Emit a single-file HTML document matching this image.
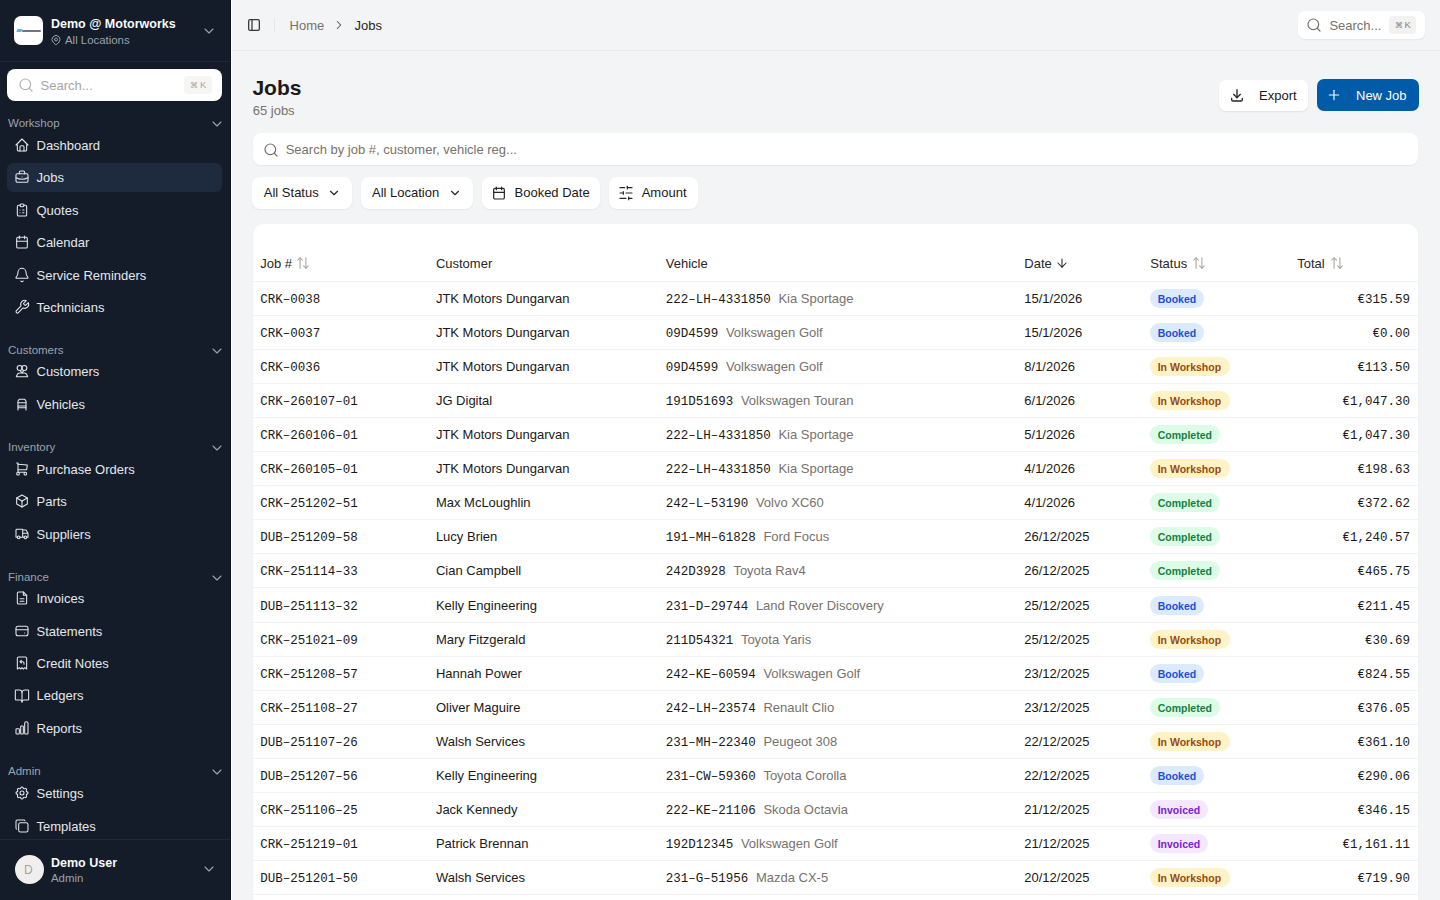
<!DOCTYPE html>
<html><head><meta charset="utf-8"><title>Jobs</title>
<style>
*{box-sizing:border-box;margin:0;padding:0}
html,body{width:1440px;height:900px;overflow:hidden}
body{font-family:"Liberation Sans",sans-serif;background:#f3f4f6;position:relative}
.t{position:absolute;white-space:nowrap}
.b{position:absolute}
svg.i{position:absolute;fill:none;stroke:currentColor;stroke-linecap:round;stroke-linejoin:round;overflow:visible}
</style></head><body>
<div class="b" style="left:0px;top:0px;width:230px;height:900px;background:#131c28"></div>
<div class="b" style="left:230px;top:0px;width:1px;height:900px;background:#0c1422"></div>
<div class="b" style="left:231px;top:0px;width:1px;height:900px;background:#ffffff"></div>
<div class="b" style="left:14px;top:16px;width:29px;height:29px;background:#fff;border-radius:7px"></div>
<div class="b" style="left:16.5px;top:29px;width:5px;height:2.8px;background:#5db4ee;transform:skewX(-25deg)"></div>
<div class="b" style="left:22px;top:29.6px;width:19px;height:2.2px;background:#6f7682;border-radius:1px"></div>
<div class="t " style="left:51px;top:18px;font-size:12.5px;line-height:12.5px;color:#f9fafb;font-weight:700;font-family:'Liberation Sans',sans-serif;">Demo @ Motorworks</div>
<svg class="i" viewBox="0 0 24 24" style="left:50px;top:33.5px;width:12px;height:12px;color:#9ca3af;stroke-width:2;"><path d="M9 11a3 3 0 1 0 6 0a3 3 0 0 0-6 0"/><path d="M17.657 16.657l-4.243 4.243a2 2 0 0 1-2.827 0l-4.244-4.243a8 8 0 1 1 11.314 0z"/></svg>
<div class="t " style="left:65px;top:35px;font-size:11.4px;line-height:11.4px;color:#9ca3af;font-weight:400;font-family:'Liberation Sans',sans-serif;">All Locations</div>
<svg class="i" viewBox="0 0 24 24" style="left:201px;top:23px;width:16px;height:16px;color:#9ca3af;stroke-width:1.6;"><path d="m6 9 6 6 6-6"/></svg>
<div class="b" style="left:0px;top:61px;width:230px;height:1px;background:#1e293b"></div>
<div class="b" style="left:7px;top:69px;width:215px;height:32px;background:#fff;border-radius:8px"></div>
<svg class="i" viewBox="0 0 24 24" style="left:17.5px;top:77px;width:16px;height:16px;color:#b3b3b3;stroke-width:1.8;"><circle cx="11" cy="11" r="8"/><path d="m21 21-4.3-4.3"/></svg>
<div class="t " style="left:40.5px;top:79px;font-size:13px;line-height:13px;color:#a6a6a6;font-weight:400;font-family:'Liberation Sans',sans-serif;">Search...</div>
<div class="b" style="left:184px;top:76px;width:28px;height:18px;background:#f5f5f4;border-radius:4px"></div>
<div class="t " style="left:189.5px;top:82px;font-size:7.5px;line-height:7.5px;color:#aaa6a2;font-weight:400;font-family:'Liberation Sans',sans-serif;">⌘</div>
<div class="t " style="left:200px;top:80px;font-size:9.5px;line-height:9.5px;color:#aaa6a2;font-weight:400;font-family:'Liberation Sans',sans-serif;">K</div>
<div class="t " style="left:8px;top:118px;font-size:11.5px;line-height:11.5px;color:#9ca3af;font-weight:400;font-family:'Liberation Sans',sans-serif;">Workshop</div>
<svg class="i" viewBox="0 0 24 24" style="left:208.5px;top:116px;width:16px;height:16px;color:#9ca3af;stroke-width:1.6;"><path d="m6 9 6 6 6-6"/></svg>
<svg class="i" viewBox="0 0 24 24" style="left:14px;top:137.0px;width:16px;height:16px;color:#e5e7eb;stroke-width:1.6;"><path d="M5 12H3l9-9 9 9h-2"/><path d="M5 12v7a2 2 0 0 0 2 2h10a2 2 0 0 0 2-2v-7"/><path d="M9 21v-6a2 2 0 0 1 2-2h2a2 2 0 0 1 2 2v6"/></svg>
<div class="t " style="left:36.5px;top:139px;font-size:13px;line-height:13px;color:#e5e7eb;font-weight:400;font-family:'Liberation Sans',sans-serif;">Dashboard</div>
<div class="b" style="left:7px;top:163.4px;width:215px;height:28.3px;background:#1e2a3d;border-radius:6px"></div>
<svg class="i" viewBox="0 0 24 24" style="left:14px;top:169.4px;width:16px;height:16px;color:#e5e7eb;stroke-width:1.6;"><path d="M3 9a2 2 0 0 1 2-2h14a2 2 0 0 1 2 2v9a2 2 0 0 1-2 2H5a2 2 0 0 1-2-2z"/><path d="M8 7V5a2 2 0 0 1 2-2h4a2 2 0 0 1 2 2v2"/><path d="M12 12v.01"/><path d="M3 13a20 20 0 0 0 18 0"/></svg>
<div class="t " style="left:36.5px;top:171px;font-size:13px;line-height:13px;color:#e5e7eb;font-weight:400;font-family:'Liberation Sans',sans-serif;">Jobs</div>
<svg class="i" viewBox="0 0 24 24" style="left:14px;top:201.8px;width:16px;height:16px;color:#e5e7eb;stroke-width:1.6;"><path d="M9 5H7a2 2 0 0 0-2 2v12a2 2 0 0 0 2 2h10a2 2 0 0 0 2-2V7a2 2 0 0 0-2-2h-2"/><path d="M9 5a2 2 0 0 1 2-2h2a2 2 0 0 1 2 2a2 2 0 0 1-2 2h-2a2 2 0 0 1-2-2z"/><path d="M9 12h.01"/><path d="M13 12h2"/><path d="M9 16h.01"/><path d="M13 16h2"/></svg>
<div class="t " style="left:36.5px;top:204px;font-size:13px;line-height:13px;color:#e5e7eb;font-weight:400;font-family:'Liberation Sans',sans-serif;">Quotes</div>
<svg class="i" viewBox="0 0 24 24" style="left:14px;top:234.2px;width:16px;height:16px;color:#e5e7eb;stroke-width:1.6;"><path d="M4 7a2 2 0 0 1 2-2h12a2 2 0 0 1 2 2v12a2 2 0 0 1-2 2H6a2 2 0 0 1-2-2z"/><path d="M16 3v4"/><path d="M8 3v4"/><path d="M4 11h16"/></svg>
<div class="t " style="left:36.5px;top:236px;font-size:13px;line-height:13px;color:#e5e7eb;font-weight:400;font-family:'Liberation Sans',sans-serif;">Calendar</div>
<svg class="i" viewBox="0 0 24 24" style="left:14px;top:266.6px;width:16px;height:16px;color:#e5e7eb;stroke-width:1.6;"><path d="M10.268 21a2 2 0 0 0 3.464 0"/><path d="M3.262 15.326A1 1 0 0 0 4 17h16a1 1 0 0 0 .74-1.673C19.41 13.956 18 12.499 18 8A6 6 0 0 0 6 8c0 4.499-1.411 5.956-2.738 7.326"/></svg>
<div class="t " style="left:36.5px;top:269px;font-size:13px;line-height:13px;color:#e5e7eb;font-weight:400;font-family:'Liberation Sans',sans-serif;">Service Reminders</div>
<svg class="i" viewBox="0 0 24 24" style="left:14px;top:299.0px;width:16px;height:16px;color:#e5e7eb;stroke-width:1.6;"><path d="M14.7 6.3a1 1 0 0 0 0 1.4l1.6 1.6a1 1 0 0 0 1.4 0l3.77-3.77a6 6 0 0 1-7.94 7.94l-6.91 6.91a2.12 2.12 0 0 1-3-3l6.91-6.91a6 6 0 0 1 7.94-7.94l-3.76 3.76z"/></svg>
<div class="t " style="left:36.5px;top:301px;font-size:13px;line-height:13px;color:#e5e7eb;font-weight:400;font-family:'Liberation Sans',sans-serif;">Technicians</div>
<div class="t " style="left:8px;top:345px;font-size:11.5px;line-height:11.5px;color:#9ca3af;font-weight:400;font-family:'Liberation Sans',sans-serif;">Customers</div>
<svg class="i" viewBox="0 0 24 24" style="left:208.5px;top:343px;width:16px;height:16px;color:#9ca3af;stroke-width:1.6;"><path d="m6 9 6 6 6-6"/></svg>
<svg class="i" viewBox="0 0 24 24" style="left:14px;top:363.4px;width:16px;height:16px;color:#e5e7eb;stroke-width:1.6;"><circle cx="8.5" cy="7.5" r="3.8"/><circle cx="15.5" cy="7.5" r="3.8"/><path d="M3.5 20.5l1.2-2.8A4 4 0 0 1 8.4 15h7.2a4 4 0 0 1 3.7 2.7l1.2 2.8z"/><path d="M9.5 11.5l2.5 3.5 2.5-3.5"/></svg>
<div class="t " style="left:36.5px;top:365px;font-size:13px;line-height:13px;color:#e5e7eb;font-weight:400;font-family:'Liberation Sans',sans-serif;">Customers</div>
<svg class="i" viewBox="0 0 24 24" style="left:14px;top:395.79999999999995px;width:16px;height:16px;color:#e5e7eb;stroke-width:1.6;"><path d="M6 21V7.5L7.8 5h8.4L18 7.5V21"/><path d="M6 10h12"/><path d="M6 15h12"/><path d="M6 17.5h12"/></svg>
<div class="t " style="left:36.5px;top:398px;font-size:13px;line-height:13px;color:#e5e7eb;font-weight:400;font-family:'Liberation Sans',sans-serif;">Vehicles</div>
<div class="t " style="left:8px;top:442px;font-size:11.5px;line-height:11.5px;color:#9ca3af;font-weight:400;font-family:'Liberation Sans',sans-serif;">Inventory</div>
<svg class="i" viewBox="0 0 24 24" style="left:208.5px;top:440px;width:16px;height:16px;color:#9ca3af;stroke-width:1.6;"><path d="m6 9 6 6 6-6"/></svg>
<svg class="i" viewBox="0 0 24 24" style="left:14px;top:461.0px;width:16px;height:16px;color:#e5e7eb;stroke-width:1.6;"><circle cx="6" cy="19" r="2"/><circle cx="17" cy="19" r="2"/><path d="M17 17H6V3H4"/><path d="M6 5l14 1-1 7H6"/></svg>
<div class="t " style="left:36.5px;top:463px;font-size:13px;line-height:13px;color:#e5e7eb;font-weight:400;font-family:'Liberation Sans',sans-serif;">Purchase Orders</div>
<svg class="i" viewBox="0 0 24 24" style="left:14px;top:493.4px;width:16px;height:16px;color:#e5e7eb;stroke-width:1.6;"><path d="M12 3l8 4.5v9L12 21l-8-4.5v-9L12 3"/><path d="M12 12l8-4.5"/><path d="M12 12v9"/><path d="M12 12L4 7.5"/></svg>
<div class="t " style="left:36.5px;top:495px;font-size:13px;line-height:13px;color:#e5e7eb;font-weight:400;font-family:'Liberation Sans',sans-serif;">Parts</div>
<svg class="i" viewBox="0 0 24 24" style="left:14px;top:525.8px;width:16px;height:16px;color:#e5e7eb;stroke-width:1.6;"><circle cx="7" cy="17" r="2"/><circle cx="17" cy="17" r="2"/><path d="M5 17H3V6a1 1 0 0 1 1-1h9v12m-4 0h6m4 0h2v-6h-8m0-5h5l3 5"/></svg>
<div class="t " style="left:36.5px;top:528px;font-size:13px;line-height:13px;color:#e5e7eb;font-weight:400;font-family:'Liberation Sans',sans-serif;">Suppliers</div>
<div class="t " style="left:8px;top:572px;font-size:11.5px;line-height:11.5px;color:#9ca3af;font-weight:400;font-family:'Liberation Sans',sans-serif;">Finance</div>
<svg class="i" viewBox="0 0 24 24" style="left:208.5px;top:570px;width:16px;height:16px;color:#9ca3af;stroke-width:1.6;"><path d="m6 9 6 6 6-6"/></svg>
<svg class="i" viewBox="0 0 24 24" style="left:14px;top:590.3px;width:16px;height:16px;color:#e5e7eb;stroke-width:1.6;"><path d="M14 3v4a1 1 0 0 0 1 1h4"/><path d="M17 21H7a2 2 0 0 1-2-2V5a2 2 0 0 1 2-2h7l5 5v11a2 2 0 0 1-2 2z"/><path d="M9 13h6"/><path d="M9 17h6"/></svg>
<div class="t " style="left:36.5px;top:592px;font-size:13px;line-height:13px;color:#e5e7eb;font-weight:400;font-family:'Liberation Sans',sans-serif;">Invoices</div>
<svg class="i" viewBox="0 0 24 24" style="left:14px;top:622.6999999999999px;width:16px;height:16px;color:#e5e7eb;stroke-width:1.6;"><path d="M3 8a3 3 0 0 1 3-3h12a3 3 0 0 1 3 3v8a3 3 0 0 1-3 3H6a3 3 0 0 1-3-3z"/><path d="M3 10h18"/><path d="M16 15h.01"/></svg>
<div class="t " style="left:36.5px;top:625px;font-size:13px;line-height:13px;color:#e5e7eb;font-weight:400;font-family:'Liberation Sans',sans-serif;">Statements</div>
<svg class="i" viewBox="0 0 24 24" style="left:14px;top:655.0999999999999px;width:16px;height:16px;color:#e5e7eb;stroke-width:1.6;"><path d="M5 21V5a2 2 0 0 1 2-2h10a2 2 0 0 1 2 2v16l-3-2-2 2-2-2-2 2-2-2-3 2"/><path d="M15 14v-2a2 2 0 0 0-2-2H9l2-2m0 4-2-2"/></svg>
<div class="t " style="left:36.5px;top:657px;font-size:13px;line-height:13px;color:#e5e7eb;font-weight:400;font-family:'Liberation Sans',sans-serif;">Credit Notes</div>
<svg class="i" viewBox="0 0 24 24" style="left:14px;top:687.5px;width:16px;height:16px;color:#e5e7eb;stroke-width:1.6;"><path d="M12 7v14"/><path d="M3 18a1 1 0 0 1-1-1V4a1 1 0 0 1 1-1h5a4 4 0 0 1 4 4 4 4 0 0 1 4-4h5a1 1 0 0 1 1 1v13a1 1 0 0 1-1 1h-6a3 3 0 0 0-3 3 3 3 0 0 0-3-3z"/></svg>
<div class="t " style="left:36.5px;top:689px;font-size:13px;line-height:13px;color:#e5e7eb;font-weight:400;font-family:'Liberation Sans',sans-serif;">Ledgers</div>
<svg class="i" viewBox="0 0 24 24" style="left:14px;top:719.9px;width:16px;height:16px;color:#e5e7eb;stroke-width:1.6;"><path d="M3 14a1 1 0 0 1 1-1h3a1 1 0 0 1 1 1v6a1 1 0 0 1-1 1H4a1 1 0 0 1-1-1z"/><path d="M10 10a1 1 0 0 1 1-1h2a1 1 0 0 1 1 1v10a1 1 0 0 1-1 1h-2a1 1 0 0 1-1-1z"/><path d="M16 5a2.5 2.5 0 0 1 5 0v15a1 1 0 0 1-1 1h-3a1 1 0 0 1-1-1z"/></svg>
<div class="t " style="left:36.5px;top:722px;font-size:13px;line-height:13px;color:#e5e7eb;font-weight:400;font-family:'Liberation Sans',sans-serif;">Reports</div>
<div class="t " style="left:8px;top:766px;font-size:11.5px;line-height:11.5px;color:#9ca3af;font-weight:400;font-family:'Liberation Sans',sans-serif;">Admin</div>
<svg class="i" viewBox="0 0 24 24" style="left:208.5px;top:764px;width:16px;height:16px;color:#9ca3af;stroke-width:1.6;"><path d="m6 9 6 6 6-6"/></svg>
<svg class="i" viewBox="0 0 24 24" style="left:14px;top:785.3px;width:16px;height:16px;color:#e5e7eb;stroke-width:1.6;"><path d="M10.325 4.317c.426-1.756 2.924-1.756 3.35 0a1.724 1.724 0 0 0 2.573 1.066c1.543-.94 3.31.826 2.37 2.37a1.724 1.724 0 0 0 1.065 2.572c1.756.426 1.756 2.924 0 3.35a1.724 1.724 0 0 0-1.066 2.573c.94 1.543-.826 3.31-2.37 2.37a1.724 1.724 0 0 0-2.572 1.065c-.426 1.756-2.924 1.756-3.35 0a1.724 1.724 0 0 0-2.573-1.066c-1.543.94-3.31-.826-2.37-2.37a1.724 1.724 0 0 0-1.065-2.572c-1.756-.426-1.756-2.924 0-3.35a1.724 1.724 0 0 0 1.066-2.573c-.94-1.543.826-3.31 2.37-2.37c1 .608 2.296.07 2.572-1.065z"/><path d="M9 12a3 3 0 1 0 6 0a3 3 0 0 0-6 0"/></svg>
<div class="t " style="left:36.5px;top:787px;font-size:13px;line-height:13px;color:#e5e7eb;font-weight:400;font-family:'Liberation Sans',sans-serif;">Settings</div>
<svg class="i" viewBox="0 0 24 24" style="left:14px;top:817.6999999999999px;width:16px;height:16px;color:#e5e7eb;stroke-width:1.6;"><path d="M7 9.667A2.667 2.667 0 0 1 9.667 7h8.666A2.667 2.667 0 0 1 21 9.667v8.666A2.667 2.667 0 0 1 18.333 21H9.667A2.667 2.667 0 0 1 7 18.333z"/><path d="M4.012 16.737A2.005 2.005 0 0 1 3 15V5c0-1.1.9-2 2-2h10c.75 0 1.158.385 1.5 1"/></svg>
<div class="t " style="left:36.5px;top:820px;font-size:13px;line-height:13px;color:#e5e7eb;font-weight:400;font-family:'Liberation Sans',sans-serif;">Templates</div>
<div class="b" style="left:0px;top:839px;width:230px;height:1px;background:#1e293b"></div>
<div class="b" style="left:14.5px;top:855px;width:29px;height:29px;background:#f0efed;border-radius:50%"></div>
<div class="t " style="left:24px;top:864px;font-size:12px;line-height:12px;color:#a8a29e;font-weight:400;font-family:'Liberation Sans',sans-serif;">D</div>
<div class="t " style="left:51px;top:857px;font-size:12.5px;line-height:12.5px;color:#f9fafb;font-weight:700;font-family:'Liberation Sans',sans-serif;">Demo User</div>
<div class="t " style="left:51px;top:873px;font-size:11.4px;line-height:11.4px;color:#9ca3af;font-weight:400;font-family:'Liberation Sans',sans-serif;">Admin</div>
<svg class="i" viewBox="0 0 24 24" style="left:200.5px;top:861px;width:16px;height:16px;color:#9ca3af;stroke-width:1.6;"><path d="m6 9 6 6 6-6"/></svg>
<svg class="i" viewBox="0 0 24 24" style="left:246px;top:17px;width:16px;height:16px;color:#3a3633;stroke-width:1.9;"><path d="M4 6a2 2 0 0 1 2-2h12a2 2 0 0 1 2 2v12a2 2 0 0 1-2 2H6a2 2 0 0 1-2-2z"/><path d="M9 4v16"/></svg>
<div class="b" style="left:274px;top:18px;width:1px;height:14px;background:#e5e7eb"></div>
<div class="t " style="left:289.6px;top:19px;font-size:13px;line-height:13px;color:#78716c;font-weight:400;font-family:'Liberation Sans',sans-serif;">Home</div>
<svg class="i" viewBox="0 0 24 24" style="left:331.5px;top:18px;width:14px;height:14px;color:#57534e;stroke-width:1.8;"><path d="m9 18 6-6-6-6"/></svg>
<div class="t " style="left:354.6px;top:19px;font-size:13px;line-height:13px;color:#292524;font-weight:400;font-family:'Liberation Sans',sans-serif;">Jobs</div>
<div class="b" style="left:232px;top:50px;width:1208px;height:1px;background:#eaebee"></div>
<div class="b" style="left:1298px;top:11px;width:127px;height:28px;background:#fff;border-radius:7px;box-shadow:0 1px 2px rgba(0,0,0,.06)"></div>
<svg class="i" viewBox="0 0 24 24" style="left:1306px;top:16.5px;width:16px;height:16px;color:#78716c;stroke-width:1.8;"><circle cx="11" cy="11" r="8"/><path d="m21 21-4.3-4.3"/></svg>
<div class="t " style="left:1329.4px;top:19px;font-size:13px;line-height:13px;color:#78716c;font-weight:400;font-family:'Liberation Sans',sans-serif;">Search...</div>
<div class="b" style="left:1389px;top:16px;width:27px;height:18px;background:#f3f2f0;border-radius:4px"></div>
<div class="t " style="left:1394.5px;top:22px;font-size:7.5px;line-height:7.5px;color:#8a847f;font-weight:400;font-family:'Liberation Sans',sans-serif;">⌘</div>
<div class="t " style="left:1404.5px;top:20px;font-size:9.5px;line-height:9.5px;color:#8a847f;font-weight:400;font-family:'Liberation Sans',sans-serif;">K</div>
<div class="t " style="left:252.4px;top:77px;font-size:21px;line-height:21px;color:#1c1917;font-weight:700;font-family:'Liberation Sans',sans-serif;">Jobs</div>
<div class="t " style="left:252.7px;top:104px;font-size:13px;line-height:13px;color:#78716c;font-weight:400;font-family:'Liberation Sans',sans-serif;">65 jobs</div>
<div class="b" style="left:1219px;top:80px;width:89px;height:31px;background:#fff;border-radius:7px;box-shadow:0 1px 2px rgba(0,0,0,.08)"></div>
<svg class="i" viewBox="0 0 24 24" style="left:1229px;top:86.5px;width:16px;height:16px;color:#292524;stroke-width:2;"><path d="M4 17v2a2 2 0 0 0 2 2h12a2 2 0 0 0 2-2v-2"/><path d="M7 11l5 5 5-5"/><path d="M12 4v12"/></svg>
<div class="t " style="left:1259px;top:89px;font-size:13px;line-height:13px;color:#1c1917;font-weight:400;font-family:'Liberation Sans',sans-serif;">Export</div>
<div class="b" style="left:1317px;top:79px;width:102px;height:32px;background:#005ba8;border-radius:7px"></div>
<svg class="i" viewBox="0 0 24 24" style="left:1325.7px;top:87.3px;width:16px;height:16px;color:#ffffff;stroke-width:1.7;"><path d="M5 12h14"/><path d="M12 5v14"/></svg>
<div class="t " style="left:1356px;top:89px;font-size:13px;line-height:13px;color:#ffffff;font-weight:400;font-family:'Liberation Sans',sans-serif;">New Job</div>
<div class="b" style="left:253px;top:133px;width:1165px;height:32px;background:#fff;border-radius:8px;box-shadow:0 1px 2px rgba(0,0,0,.06)"></div>
<svg class="i" viewBox="0 0 24 24" style="left:262.5px;top:142px;width:16px;height:16px;color:#78716c;stroke-width:1.8;"><circle cx="11" cy="11" r="8"/><path d="m21 21-4.3-4.3"/></svg>
<div class="t " style="left:285.7px;top:143px;font-size:13px;line-height:13px;color:#78716c;font-weight:400;font-family:'Liberation Sans',sans-serif;">Search by job #, customer, vehicle reg...</div>
<div class="b" style="left:252px;top:177px;width:100px;height:32px;background:#fff;border-radius:8px;box-shadow:0 1px 2px rgba(0,0,0,.06)"></div>
<div class="t " style="left:263.8px;top:186px;font-size:13px;line-height:13px;color:#1c1917;font-weight:400;font-family:'Liberation Sans',sans-serif;">All Status</div>
<svg class="i" viewBox="0 0 24 24" style="left:327.3px;top:186px;width:14px;height:14px;color:#292524;stroke-width:2;"><path d="m6 9 6 6 6-6"/></svg>
<div class="b" style="left:361px;top:177px;width:112px;height:32px;background:#fff;border-radius:8px;box-shadow:0 1px 2px rgba(0,0,0,.06)"></div>
<div class="t " style="left:372px;top:186px;font-size:13px;line-height:13px;color:#1c1917;font-weight:400;font-family:'Liberation Sans',sans-serif;">All Location</div>
<svg class="i" viewBox="0 0 24 24" style="left:448px;top:186px;width:14px;height:14px;color:#292524;stroke-width:2;"><path d="m6 9 6 6 6-6"/></svg>
<div class="b" style="left:482px;top:177px;width:118px;height:32px;background:#fff;border-radius:8px;box-shadow:0 1px 2px rgba(0,0,0,.06)"></div>
<div class="t " style="left:514.5px;top:186px;font-size:13px;line-height:13px;color:#1c1917;font-weight:400;font-family:'Liberation Sans',sans-serif;">Booked Date</div>
<svg class="i" viewBox="0 0 24 24" style="left:491px;top:185px;width:16px;height:16px;color:#292524;stroke-width:1.8;"><path d="M4 7a2 2 0 0 1 2-2h12a2 2 0 0 1 2 2v12a2 2 0 0 1-2 2H6a2 2 0 0 1-2-2z"/><path d="M16 3v4"/><path d="M8 3v4"/><path d="M4 11h16"/></svg>
<div class="b" style="left:609px;top:177px;width:89px;height:32px;background:#fff;border-radius:8px;box-shadow:0 1px 2px rgba(0,0,0,.06)"></div>
<div class="t " style="left:641.7px;top:186px;font-size:13px;line-height:13px;color:#1c1917;font-weight:400;font-family:'Liberation Sans',sans-serif;">Amount</div>
<svg class="i" viewBox="0 0 24 24" style="left:618.3px;top:185px;width:16px;height:16px;color:#292524;stroke-width:1.8;"><path d="M21 4h-7"/><path d="M10 4H3"/><path d="M21 12h-9"/><path d="M8 12H3"/><path d="M21 20h-5"/><path d="M12 20H3"/><path d="M14 2v4"/><path d="M8 10v4"/><path d="M16 18v4"/></svg>
<div class="b" style="left:252.5px;top:223.5px;width:1165px;height:700px;background:#fff;border-radius:11px;box-shadow:0 1px 2px rgba(0,0,0,.06)"></div>
<div class="t " style="left:260.3px;top:257px;font-size:13px;line-height:13px;color:#292524;font-weight:400;font-family:'Liberation Sans',sans-serif;">Job #</div>
<svg class="i" viewBox="0 0 24 24" style="left:296px;top:256px;width:14px;height:14px;color:#a8a29e;stroke-width:1.8;"><path d="M3 7l4-4 4 4"/><path d="M7 3v18"/><path d="M21 17l-4 4-4-4"/><path d="M17 21V3"/></svg>
<div class="t " style="left:435.9px;top:257px;font-size:13px;line-height:13px;color:#292524;font-weight:400;font-family:'Liberation Sans',sans-serif;">Customer</div>
<div class="t " style="left:665.8px;top:257px;font-size:13px;line-height:13px;color:#292524;font-weight:400;font-family:'Liberation Sans',sans-serif;">Vehicle</div>
<div class="t " style="left:1024.3px;top:257px;font-size:13px;line-height:13px;color:#292524;font-weight:400;font-family:'Liberation Sans',sans-serif;">Date</div>
<svg class="i" viewBox="0 0 24 24" style="left:1055.2px;top:256.2px;width:14px;height:14px;color:#292524;stroke-width:1.8;"><path d="M12 5v14"/><path d="m19 12-7 7-7-7"/></svg>
<div class="t " style="left:1150.3px;top:257px;font-size:13px;line-height:13px;color:#292524;font-weight:400;font-family:'Liberation Sans',sans-serif;">Status</div>
<svg class="i" viewBox="0 0 24 24" style="left:1192px;top:256px;width:14px;height:14px;color:#a8a29e;stroke-width:1.8;"><path d="M3 7l4-4 4 4"/><path d="M7 3v18"/><path d="M21 17l-4 4-4-4"/><path d="M17 21V3"/></svg>
<div class="t " style="left:1297.2px;top:257px;font-size:13px;line-height:13px;color:#292524;font-weight:400;font-family:'Liberation Sans',sans-serif;">Total</div>
<svg class="i" viewBox="0 0 24 24" style="left:1330px;top:256px;width:14px;height:14px;color:#a8a29e;stroke-width:1.8;"><path d="M3 7l4-4 4 4"/><path d="M7 3v18"/><path d="M21 17l-4 4-4-4"/><path d="M17 21V3"/></svg>
<div class="b" style="left:252.5px;top:281px;width:1165px;height:1px;background:#f2f3f4"></div>
<div class="t " style="left:260.3px;top:294px;font-size:12.5px;line-height:12.5px;color:#1c1917;font-weight:400;font-family:'Liberation Mono',monospace;">CRK–0038</div>
<div class="t " style="left:435.9px;top:292px;font-size:13px;line-height:13px;color:#1c1917;font-weight:400;font-family:'Liberation Sans',sans-serif;">JTK Motors Dungarvan</div>
<div class="t " style="left:665.8px;top:294px;font-size:12.5px;line-height:12.5px;color:#1c1917;font-weight:400;font-family:'Liberation Mono',monospace;">222–LH–4331850</div>
<div class="t " style="left:778.4px;top:292px;font-size:13px;line-height:13px;color:#78716c;font-weight:400;font-family:'Liberation Sans',sans-serif;">Kia Sportage</div>
<div class="t " style="left:1024.3px;top:292px;font-size:13px;line-height:13px;color:#1c1917;font-weight:400;font-family:'Liberation Sans',sans-serif;">15/1/2026</div>
<div class="b" style="left:1149.7px;top:289px;width:54.3px;height:19px;background:#dbeafe;border-radius:10px"></div>
<div class="t " style="left:1157.7px;top:294px;font-size:10.5px;line-height:10.5px;color:#1d4ed8;font-weight:700;font-family:'Liberation Sans',sans-serif;">Booked</div>
<div class="t" style="right:30px;top:294px;font-size:12.5px;line-height:12.5px;color:#1c1917;font-weight:400;font-family:'Liberation Mono',monospace;text-align:right;">€315.59</div>
<div class="b" style="left:252.5px;top:315px;width:1165px;height:1px;background:#f2f3f4"></div>
<div class="t " style="left:260.3px;top:328px;font-size:12.5px;line-height:12.5px;color:#1c1917;font-weight:400;font-family:'Liberation Mono',monospace;">CRK–0037</div>
<div class="t " style="left:435.9px;top:326px;font-size:13px;line-height:13px;color:#1c1917;font-weight:400;font-family:'Liberation Sans',sans-serif;">JTK Motors Dungarvan</div>
<div class="t " style="left:665.8px;top:328px;font-size:12.5px;line-height:12.5px;color:#1c1917;font-weight:400;font-family:'Liberation Mono',monospace;">09D4599</div>
<div class="t " style="left:725.9px;top:326px;font-size:13px;line-height:13px;color:#78716c;font-weight:400;font-family:'Liberation Sans',sans-serif;">Volkswagen Golf</div>
<div class="t " style="left:1024.3px;top:326px;font-size:13px;line-height:13px;color:#1c1917;font-weight:400;font-family:'Liberation Sans',sans-serif;">15/1/2026</div>
<div class="b" style="left:1149.7px;top:323px;width:54.3px;height:19px;background:#dbeafe;border-radius:10px"></div>
<div class="t " style="left:1157.7px;top:328px;font-size:10.5px;line-height:10.5px;color:#1d4ed8;font-weight:700;font-family:'Liberation Sans',sans-serif;">Booked</div>
<div class="t" style="right:30px;top:328px;font-size:12.5px;line-height:12.5px;color:#1c1917;font-weight:400;font-family:'Liberation Mono',monospace;text-align:right;">€0.00</div>
<div class="b" style="left:252.5px;top:349px;width:1165px;height:1px;background:#f2f3f4"></div>
<div class="t " style="left:260.3px;top:362px;font-size:12.5px;line-height:12.5px;color:#1c1917;font-weight:400;font-family:'Liberation Mono',monospace;">CRK–0036</div>
<div class="t " style="left:435.9px;top:360px;font-size:13px;line-height:13px;color:#1c1917;font-weight:400;font-family:'Liberation Sans',sans-serif;">JTK Motors Dungarvan</div>
<div class="t " style="left:665.8px;top:362px;font-size:12.5px;line-height:12.5px;color:#1c1917;font-weight:400;font-family:'Liberation Mono',monospace;">09D4599</div>
<div class="t " style="left:725.9px;top:360px;font-size:13px;line-height:13px;color:#78716c;font-weight:400;font-family:'Liberation Sans',sans-serif;">Volkswagen Golf</div>
<div class="t " style="left:1024.3px;top:360px;font-size:13px;line-height:13px;color:#1c1917;font-weight:400;font-family:'Liberation Sans',sans-serif;">8/1/2026</div>
<div class="b" style="left:1149.7px;top:357px;width:80.3px;height:19px;background:#fef3c7;border-radius:10px"></div>
<div class="t " style="left:1157.7px;top:362px;font-size:10.5px;line-height:10.5px;color:#9a4a0c;font-weight:700;font-family:'Liberation Sans',sans-serif;">In Workshop</div>
<div class="t" style="right:30px;top:362px;font-size:12.5px;line-height:12.5px;color:#1c1917;font-weight:400;font-family:'Liberation Mono',monospace;text-align:right;">€113.50</div>
<div class="b" style="left:252.5px;top:383px;width:1165px;height:1px;background:#f2f3f4"></div>
<div class="t " style="left:260.3px;top:396px;font-size:12.5px;line-height:12.5px;color:#1c1917;font-weight:400;font-family:'Liberation Mono',monospace;">CRK–260107–01</div>
<div class="t " style="left:435.9px;top:394px;font-size:13px;line-height:13px;color:#1c1917;font-weight:400;font-family:'Liberation Sans',sans-serif;">JG Digital</div>
<div class="t " style="left:665.8px;top:396px;font-size:12.5px;line-height:12.5px;color:#1c1917;font-weight:400;font-family:'Liberation Mono',monospace;">191D51693</div>
<div class="t " style="left:740.9px;top:394px;font-size:13px;line-height:13px;color:#78716c;font-weight:400;font-family:'Liberation Sans',sans-serif;">Volkswagen Touran</div>
<div class="t " style="left:1024.3px;top:394px;font-size:13px;line-height:13px;color:#1c1917;font-weight:400;font-family:'Liberation Sans',sans-serif;">6/1/2026</div>
<div class="b" style="left:1149.7px;top:391px;width:80.3px;height:19px;background:#fef3c7;border-radius:10px"></div>
<div class="t " style="left:1157.7px;top:396px;font-size:10.5px;line-height:10.5px;color:#9a4a0c;font-weight:700;font-family:'Liberation Sans',sans-serif;">In Workshop</div>
<div class="t" style="right:30px;top:396px;font-size:12.5px;line-height:12.5px;color:#1c1917;font-weight:400;font-family:'Liberation Mono',monospace;text-align:right;">€1,047.30</div>
<div class="b" style="left:252.5px;top:417px;width:1165px;height:1px;background:#f2f3f4"></div>
<div class="t " style="left:260.3px;top:430px;font-size:12.5px;line-height:12.5px;color:#1c1917;font-weight:400;font-family:'Liberation Mono',monospace;">CRK–260106–01</div>
<div class="t " style="left:435.9px;top:428px;font-size:13px;line-height:13px;color:#1c1917;font-weight:400;font-family:'Liberation Sans',sans-serif;">JTK Motors Dungarvan</div>
<div class="t " style="left:665.8px;top:430px;font-size:12.5px;line-height:12.5px;color:#1c1917;font-weight:400;font-family:'Liberation Mono',monospace;">222–LH–4331850</div>
<div class="t " style="left:778.4px;top:428px;font-size:13px;line-height:13px;color:#78716c;font-weight:400;font-family:'Liberation Sans',sans-serif;">Kia Sportage</div>
<div class="t " style="left:1024.3px;top:428px;font-size:13px;line-height:13px;color:#1c1917;font-weight:400;font-family:'Liberation Sans',sans-serif;">5/1/2026</div>
<div class="b" style="left:1149.7px;top:425px;width:70px;height:19px;background:#dcfce7;border-radius:10px"></div>
<div class="t " style="left:1157.7px;top:430px;font-size:10.5px;line-height:10.5px;color:#15803d;font-weight:700;font-family:'Liberation Sans',sans-serif;">Completed</div>
<div class="t" style="right:30px;top:430px;font-size:12.5px;line-height:12.5px;color:#1c1917;font-weight:400;font-family:'Liberation Mono',monospace;text-align:right;">€1,047.30</div>
<div class="b" style="left:252.5px;top:451px;width:1165px;height:1px;background:#f2f3f4"></div>
<div class="t " style="left:260.3px;top:464px;font-size:12.5px;line-height:12.5px;color:#1c1917;font-weight:400;font-family:'Liberation Mono',monospace;">CRK–260105–01</div>
<div class="t " style="left:435.9px;top:462px;font-size:13px;line-height:13px;color:#1c1917;font-weight:400;font-family:'Liberation Sans',sans-serif;">JTK Motors Dungarvan</div>
<div class="t " style="left:665.8px;top:464px;font-size:12.5px;line-height:12.5px;color:#1c1917;font-weight:400;font-family:'Liberation Mono',monospace;">222–LH–4331850</div>
<div class="t " style="left:778.4px;top:462px;font-size:13px;line-height:13px;color:#78716c;font-weight:400;font-family:'Liberation Sans',sans-serif;">Kia Sportage</div>
<div class="t " style="left:1024.3px;top:462px;font-size:13px;line-height:13px;color:#1c1917;font-weight:400;font-family:'Liberation Sans',sans-serif;">4/1/2026</div>
<div class="b" style="left:1149.7px;top:459px;width:80.3px;height:19px;background:#fef3c7;border-radius:10px"></div>
<div class="t " style="left:1157.7px;top:464px;font-size:10.5px;line-height:10.5px;color:#9a4a0c;font-weight:700;font-family:'Liberation Sans',sans-serif;">In Workshop</div>
<div class="t" style="right:30px;top:464px;font-size:12.5px;line-height:12.5px;color:#1c1917;font-weight:400;font-family:'Liberation Mono',monospace;text-align:right;">€198.63</div>
<div class="b" style="left:252.5px;top:485px;width:1165px;height:1px;background:#f2f3f4"></div>
<div class="t " style="left:260.3px;top:498px;font-size:12.5px;line-height:12.5px;color:#1c1917;font-weight:400;font-family:'Liberation Mono',monospace;">CRK–251202–51</div>
<div class="t " style="left:435.9px;top:496px;font-size:13px;line-height:13px;color:#1c1917;font-weight:400;font-family:'Liberation Sans',sans-serif;">Max McLoughlin</div>
<div class="t " style="left:665.8px;top:498px;font-size:12.5px;line-height:12.5px;color:#1c1917;font-weight:400;font-family:'Liberation Mono',monospace;">242–L–53190</div>
<div class="t " style="left:755.9px;top:496px;font-size:13px;line-height:13px;color:#78716c;font-weight:400;font-family:'Liberation Sans',sans-serif;">Volvo XC60</div>
<div class="t " style="left:1024.3px;top:496px;font-size:13px;line-height:13px;color:#1c1917;font-weight:400;font-family:'Liberation Sans',sans-serif;">4/1/2026</div>
<div class="b" style="left:1149.7px;top:493px;width:70px;height:19px;background:#dcfce7;border-radius:10px"></div>
<div class="t " style="left:1157.7px;top:498px;font-size:10.5px;line-height:10.5px;color:#15803d;font-weight:700;font-family:'Liberation Sans',sans-serif;">Completed</div>
<div class="t" style="right:30px;top:498px;font-size:12.5px;line-height:12.5px;color:#1c1917;font-weight:400;font-family:'Liberation Mono',monospace;text-align:right;">€372.62</div>
<div class="b" style="left:252.5px;top:519px;width:1165px;height:1px;background:#f2f3f4"></div>
<div class="t " style="left:260.3px;top:532px;font-size:12.5px;line-height:12.5px;color:#1c1917;font-weight:400;font-family:'Liberation Mono',monospace;">DUB–251209–58</div>
<div class="t " style="left:435.9px;top:530px;font-size:13px;line-height:13px;color:#1c1917;font-weight:400;font-family:'Liberation Sans',sans-serif;">Lucy Brien</div>
<div class="t " style="left:665.8px;top:532px;font-size:12.5px;line-height:12.5px;color:#1c1917;font-weight:400;font-family:'Liberation Mono',monospace;">191–MH–61828</div>
<div class="t " style="left:763.4px;top:530px;font-size:13px;line-height:13px;color:#78716c;font-weight:400;font-family:'Liberation Sans',sans-serif;">Ford Focus</div>
<div class="t " style="left:1024.3px;top:530px;font-size:13px;line-height:13px;color:#1c1917;font-weight:400;font-family:'Liberation Sans',sans-serif;">26/12/2025</div>
<div class="b" style="left:1149.7px;top:527px;width:70px;height:19px;background:#dcfce7;border-radius:10px"></div>
<div class="t " style="left:1157.7px;top:532px;font-size:10.5px;line-height:10.5px;color:#15803d;font-weight:700;font-family:'Liberation Sans',sans-serif;">Completed</div>
<div class="t" style="right:30px;top:532px;font-size:12.5px;line-height:12.5px;color:#1c1917;font-weight:400;font-family:'Liberation Mono',monospace;text-align:right;">€1,240.57</div>
<div class="b" style="left:252.5px;top:553px;width:1165px;height:1px;background:#f2f3f4"></div>
<div class="t " style="left:260.3px;top:566px;font-size:12.5px;line-height:12.5px;color:#1c1917;font-weight:400;font-family:'Liberation Mono',monospace;">CRK–251114–33</div>
<div class="t " style="left:435.9px;top:564px;font-size:13px;line-height:13px;color:#1c1917;font-weight:400;font-family:'Liberation Sans',sans-serif;">Cian Campbell</div>
<div class="t " style="left:665.8px;top:566px;font-size:12.5px;line-height:12.5px;color:#1c1917;font-weight:400;font-family:'Liberation Mono',monospace;">242D3928</div>
<div class="t " style="left:733.4px;top:564px;font-size:13px;line-height:13px;color:#78716c;font-weight:400;font-family:'Liberation Sans',sans-serif;">Toyota Rav4</div>
<div class="t " style="left:1024.3px;top:564px;font-size:13px;line-height:13px;color:#1c1917;font-weight:400;font-family:'Liberation Sans',sans-serif;">26/12/2025</div>
<div class="b" style="left:1149.7px;top:561px;width:70px;height:19px;background:#dcfce7;border-radius:10px"></div>
<div class="t " style="left:1157.7px;top:566px;font-size:10.5px;line-height:10.5px;color:#15803d;font-weight:700;font-family:'Liberation Sans',sans-serif;">Completed</div>
<div class="t" style="right:30px;top:566px;font-size:12.5px;line-height:12.5px;color:#1c1917;font-weight:400;font-family:'Liberation Mono',monospace;text-align:right;">€465.75</div>
<div class="b" style="left:252.5px;top:587px;width:1165px;height:1px;background:#f2f3f4"></div>
<div class="t " style="left:260.3px;top:601px;font-size:12.5px;line-height:12.5px;color:#1c1917;font-weight:400;font-family:'Liberation Mono',monospace;">DUB–251113–32</div>
<div class="t " style="left:435.9px;top:599px;font-size:13px;line-height:13px;color:#1c1917;font-weight:400;font-family:'Liberation Sans',sans-serif;">Kelly Engineering</div>
<div class="t " style="left:665.8px;top:601px;font-size:12.5px;line-height:12.5px;color:#1c1917;font-weight:400;font-family:'Liberation Mono',monospace;">231–D–29744</div>
<div class="t " style="left:755.9px;top:599px;font-size:13px;line-height:13px;color:#78716c;font-weight:400;font-family:'Liberation Sans',sans-serif;">Land Rover Discovery</div>
<div class="t " style="left:1024.3px;top:599px;font-size:13px;line-height:13px;color:#1c1917;font-weight:400;font-family:'Liberation Sans',sans-serif;">25/12/2025</div>
<div class="b" style="left:1149.7px;top:596px;width:54.3px;height:19px;background:#dbeafe;border-radius:10px"></div>
<div class="t " style="left:1157.7px;top:601px;font-size:10.5px;line-height:10.5px;color:#1d4ed8;font-weight:700;font-family:'Liberation Sans',sans-serif;">Booked</div>
<div class="t" style="right:30px;top:601px;font-size:12.5px;line-height:12.5px;color:#1c1917;font-weight:400;font-family:'Liberation Mono',monospace;text-align:right;">€211.45</div>
<div class="b" style="left:252.5px;top:622px;width:1165px;height:1px;background:#f2f3f4"></div>
<div class="t " style="left:260.3px;top:635px;font-size:12.5px;line-height:12.5px;color:#1c1917;font-weight:400;font-family:'Liberation Mono',monospace;">CRK–251021–09</div>
<div class="t " style="left:435.9px;top:633px;font-size:13px;line-height:13px;color:#1c1917;font-weight:400;font-family:'Liberation Sans',sans-serif;">Mary Fitzgerald</div>
<div class="t " style="left:665.8px;top:635px;font-size:12.5px;line-height:12.5px;color:#1c1917;font-weight:400;font-family:'Liberation Mono',monospace;">211D54321</div>
<div class="t " style="left:740.9px;top:633px;font-size:13px;line-height:13px;color:#78716c;font-weight:400;font-family:'Liberation Sans',sans-serif;">Toyota Yaris</div>
<div class="t " style="left:1024.3px;top:633px;font-size:13px;line-height:13px;color:#1c1917;font-weight:400;font-family:'Liberation Sans',sans-serif;">25/12/2025</div>
<div class="b" style="left:1149.7px;top:630px;width:80.3px;height:19px;background:#fef3c7;border-radius:10px"></div>
<div class="t " style="left:1157.7px;top:635px;font-size:10.5px;line-height:10.5px;color:#9a4a0c;font-weight:700;font-family:'Liberation Sans',sans-serif;">In Workshop</div>
<div class="t" style="right:30px;top:635px;font-size:12.5px;line-height:12.5px;color:#1c1917;font-weight:400;font-family:'Liberation Mono',monospace;text-align:right;">€30.69</div>
<div class="b" style="left:252.5px;top:656px;width:1165px;height:1px;background:#f2f3f4"></div>
<div class="t " style="left:260.3px;top:669px;font-size:12.5px;line-height:12.5px;color:#1c1917;font-weight:400;font-family:'Liberation Mono',monospace;">CRK–251208–57</div>
<div class="t " style="left:435.9px;top:667px;font-size:13px;line-height:13px;color:#1c1917;font-weight:400;font-family:'Liberation Sans',sans-serif;">Hannah Power</div>
<div class="t " style="left:665.8px;top:669px;font-size:12.5px;line-height:12.5px;color:#1c1917;font-weight:400;font-family:'Liberation Mono',monospace;">242–KE–60594</div>
<div class="t " style="left:763.4px;top:667px;font-size:13px;line-height:13px;color:#78716c;font-weight:400;font-family:'Liberation Sans',sans-serif;">Volkswagen Golf</div>
<div class="t " style="left:1024.3px;top:667px;font-size:13px;line-height:13px;color:#1c1917;font-weight:400;font-family:'Liberation Sans',sans-serif;">23/12/2025</div>
<div class="b" style="left:1149.7px;top:664px;width:54.3px;height:19px;background:#dbeafe;border-radius:10px"></div>
<div class="t " style="left:1157.7px;top:669px;font-size:10.5px;line-height:10.5px;color:#1d4ed8;font-weight:700;font-family:'Liberation Sans',sans-serif;">Booked</div>
<div class="t" style="right:30px;top:669px;font-size:12.5px;line-height:12.5px;color:#1c1917;font-weight:400;font-family:'Liberation Mono',monospace;text-align:right;">€824.55</div>
<div class="b" style="left:252.5px;top:690px;width:1165px;height:1px;background:#f2f3f4"></div>
<div class="t " style="left:260.3px;top:703px;font-size:12.5px;line-height:12.5px;color:#1c1917;font-weight:400;font-family:'Liberation Mono',monospace;">CRK–251108–27</div>
<div class="t " style="left:435.9px;top:701px;font-size:13px;line-height:13px;color:#1c1917;font-weight:400;font-family:'Liberation Sans',sans-serif;">Oliver Maguire</div>
<div class="t " style="left:665.8px;top:703px;font-size:12.5px;line-height:12.5px;color:#1c1917;font-weight:400;font-family:'Liberation Mono',monospace;">242–LH–23574</div>
<div class="t " style="left:763.4px;top:701px;font-size:13px;line-height:13px;color:#78716c;font-weight:400;font-family:'Liberation Sans',sans-serif;">Renault Clio</div>
<div class="t " style="left:1024.3px;top:701px;font-size:13px;line-height:13px;color:#1c1917;font-weight:400;font-family:'Liberation Sans',sans-serif;">23/12/2025</div>
<div class="b" style="left:1149.7px;top:698px;width:70px;height:19px;background:#dcfce7;border-radius:10px"></div>
<div class="t " style="left:1157.7px;top:703px;font-size:10.5px;line-height:10.5px;color:#15803d;font-weight:700;font-family:'Liberation Sans',sans-serif;">Completed</div>
<div class="t" style="right:30px;top:703px;font-size:12.5px;line-height:12.5px;color:#1c1917;font-weight:400;font-family:'Liberation Mono',monospace;text-align:right;">€376.05</div>
<div class="b" style="left:252.5px;top:724px;width:1165px;height:1px;background:#f2f3f4"></div>
<div class="t " style="left:260.3px;top:737px;font-size:12.5px;line-height:12.5px;color:#1c1917;font-weight:400;font-family:'Liberation Mono',monospace;">DUB–251107–26</div>
<div class="t " style="left:435.9px;top:735px;font-size:13px;line-height:13px;color:#1c1917;font-weight:400;font-family:'Liberation Sans',sans-serif;">Walsh Services</div>
<div class="t " style="left:665.8px;top:737px;font-size:12.5px;line-height:12.5px;color:#1c1917;font-weight:400;font-family:'Liberation Mono',monospace;">231–MH–22340</div>
<div class="t " style="left:763.4px;top:735px;font-size:13px;line-height:13px;color:#78716c;font-weight:400;font-family:'Liberation Sans',sans-serif;">Peugeot 308</div>
<div class="t " style="left:1024.3px;top:735px;font-size:13px;line-height:13px;color:#1c1917;font-weight:400;font-family:'Liberation Sans',sans-serif;">22/12/2025</div>
<div class="b" style="left:1149.7px;top:732px;width:80.3px;height:19px;background:#fef3c7;border-radius:10px"></div>
<div class="t " style="left:1157.7px;top:737px;font-size:10.5px;line-height:10.5px;color:#9a4a0c;font-weight:700;font-family:'Liberation Sans',sans-serif;">In Workshop</div>
<div class="t" style="right:30px;top:737px;font-size:12.5px;line-height:12.5px;color:#1c1917;font-weight:400;font-family:'Liberation Mono',monospace;text-align:right;">€361.10</div>
<div class="b" style="left:252.5px;top:758px;width:1165px;height:1px;background:#f2f3f4"></div>
<div class="t " style="left:260.3px;top:771px;font-size:12.5px;line-height:12.5px;color:#1c1917;font-weight:400;font-family:'Liberation Mono',monospace;">DUB–251207–56</div>
<div class="t " style="left:435.9px;top:769px;font-size:13px;line-height:13px;color:#1c1917;font-weight:400;font-family:'Liberation Sans',sans-serif;">Kelly Engineering</div>
<div class="t " style="left:665.8px;top:771px;font-size:12.5px;line-height:12.5px;color:#1c1917;font-weight:400;font-family:'Liberation Mono',monospace;">231–CW–59360</div>
<div class="t " style="left:763.4px;top:769px;font-size:13px;line-height:13px;color:#78716c;font-weight:400;font-family:'Liberation Sans',sans-serif;">Toyota Corolla</div>
<div class="t " style="left:1024.3px;top:769px;font-size:13px;line-height:13px;color:#1c1917;font-weight:400;font-family:'Liberation Sans',sans-serif;">22/12/2025</div>
<div class="b" style="left:1149.7px;top:766px;width:54.3px;height:19px;background:#dbeafe;border-radius:10px"></div>
<div class="t " style="left:1157.7px;top:771px;font-size:10.5px;line-height:10.5px;color:#1d4ed8;font-weight:700;font-family:'Liberation Sans',sans-serif;">Booked</div>
<div class="t" style="right:30px;top:771px;font-size:12.5px;line-height:12.5px;color:#1c1917;font-weight:400;font-family:'Liberation Mono',monospace;text-align:right;">€290.06</div>
<div class="b" style="left:252.5px;top:792px;width:1165px;height:1px;background:#f2f3f4"></div>
<div class="t " style="left:260.3px;top:805px;font-size:12.5px;line-height:12.5px;color:#1c1917;font-weight:400;font-family:'Liberation Mono',monospace;">CRK–251106–25</div>
<div class="t " style="left:435.9px;top:803px;font-size:13px;line-height:13px;color:#1c1917;font-weight:400;font-family:'Liberation Sans',sans-serif;">Jack Kennedy</div>
<div class="t " style="left:665.8px;top:805px;font-size:12.5px;line-height:12.5px;color:#1c1917;font-weight:400;font-family:'Liberation Mono',monospace;">222–KE–21106</div>
<div class="t " style="left:763.4px;top:803px;font-size:13px;line-height:13px;color:#78716c;font-weight:400;font-family:'Liberation Sans',sans-serif;">Skoda Octavia</div>
<div class="t " style="left:1024.3px;top:803px;font-size:13px;line-height:13px;color:#1c1917;font-weight:400;font-family:'Liberation Sans',sans-serif;">21/12/2025</div>
<div class="b" style="left:1149.7px;top:800px;width:58px;height:19px;background:#f3e8ff;border-radius:10px"></div>
<div class="t " style="left:1157.7px;top:805px;font-size:10.5px;line-height:10.5px;color:#7e22ce;font-weight:700;font-family:'Liberation Sans',sans-serif;">Invoiced</div>
<div class="t" style="right:30px;top:805px;font-size:12.5px;line-height:12.5px;color:#1c1917;font-weight:400;font-family:'Liberation Mono',monospace;text-align:right;">€346.15</div>
<div class="b" style="left:252.5px;top:826px;width:1165px;height:1px;background:#f2f3f4"></div>
<div class="t " style="left:260.3px;top:839px;font-size:12.5px;line-height:12.5px;color:#1c1917;font-weight:400;font-family:'Liberation Mono',monospace;">CRK–251219–01</div>
<div class="t " style="left:435.9px;top:837px;font-size:13px;line-height:13px;color:#1c1917;font-weight:400;font-family:'Liberation Sans',sans-serif;">Patrick Brennan</div>
<div class="t " style="left:665.8px;top:839px;font-size:12.5px;line-height:12.5px;color:#1c1917;font-weight:400;font-family:'Liberation Mono',monospace;">192D12345</div>
<div class="t " style="left:740.9px;top:837px;font-size:13px;line-height:13px;color:#78716c;font-weight:400;font-family:'Liberation Sans',sans-serif;">Volkswagen Golf</div>
<div class="t " style="left:1024.3px;top:837px;font-size:13px;line-height:13px;color:#1c1917;font-weight:400;font-family:'Liberation Sans',sans-serif;">21/12/2025</div>
<div class="b" style="left:1149.7px;top:834px;width:58px;height:19px;background:#f3e8ff;border-radius:10px"></div>
<div class="t " style="left:1157.7px;top:839px;font-size:10.5px;line-height:10.5px;color:#7e22ce;font-weight:700;font-family:'Liberation Sans',sans-serif;">Invoiced</div>
<div class="t" style="right:30px;top:839px;font-size:12.5px;line-height:12.5px;color:#1c1917;font-weight:400;font-family:'Liberation Mono',monospace;text-align:right;">€1,161.11</div>
<div class="b" style="left:252.5px;top:860px;width:1165px;height:1px;background:#f2f3f4"></div>
<div class="t " style="left:260.3px;top:873px;font-size:12.5px;line-height:12.5px;color:#1c1917;font-weight:400;font-family:'Liberation Mono',monospace;">DUB–251201–50</div>
<div class="t " style="left:435.9px;top:871px;font-size:13px;line-height:13px;color:#1c1917;font-weight:400;font-family:'Liberation Sans',sans-serif;">Walsh Services</div>
<div class="t " style="left:665.8px;top:873px;font-size:12.5px;line-height:12.5px;color:#1c1917;font-weight:400;font-family:'Liberation Mono',monospace;">231–G–51956</div>
<div class="t " style="left:755.9px;top:871px;font-size:13px;line-height:13px;color:#78716c;font-weight:400;font-family:'Liberation Sans',sans-serif;">Mazda CX-5</div>
<div class="t " style="left:1024.3px;top:871px;font-size:13px;line-height:13px;color:#1c1917;font-weight:400;font-family:'Liberation Sans',sans-serif;">20/12/2025</div>
<div class="b" style="left:1149.7px;top:868px;width:80.3px;height:19px;background:#fef3c7;border-radius:10px"></div>
<div class="t " style="left:1157.7px;top:873px;font-size:10.5px;line-height:10.5px;color:#9a4a0c;font-weight:700;font-family:'Liberation Sans',sans-serif;">In Workshop</div>
<div class="t" style="right:30px;top:873px;font-size:12.5px;line-height:12.5px;color:#1c1917;font-weight:400;font-family:'Liberation Mono',monospace;text-align:right;">€719.90</div>
<div class="b" style="left:252.5px;top:894px;width:1165px;height:1px;background:#f2f3f4"></div>
<div class="t " style="left:260.3px;top:907px;font-size:12.5px;line-height:12.5px;color:#1c1917;font-weight:400;font-family:'Liberation Mono',monospace;">CRK–251105–24</div>
<div class="t " style="left:435.9px;top:905px;font-size:13px;line-height:13px;color:#1c1917;font-weight:400;font-family:'Liberation Sans',sans-serif;">Sean Murphy</div>
<div class="t " style="left:665.8px;top:907px;font-size:12.5px;line-height:12.5px;color:#1c1917;font-weight:400;font-family:'Liberation Mono',monospace;">201D11223</div>
<div class="t " style="left:740.9px;top:905px;font-size:13px;line-height:13px;color:#78716c;font-weight:400;font-family:'Liberation Sans',sans-serif;">Ford Fiesta</div>
<div class="t " style="left:1024.3px;top:905px;font-size:13px;line-height:13px;color:#1c1917;font-weight:400;font-family:'Liberation Sans',sans-serif;">20/12/2025</div>
<div class="b" style="left:1149.7px;top:902px;width:70px;height:19px;background:#dcfce7;border-radius:10px"></div>
<div class="t " style="left:1157.7px;top:907px;font-size:10.5px;line-height:10.5px;color:#15803d;font-weight:700;font-family:'Liberation Sans',sans-serif;">Completed</div>
<div class="t" style="right:30px;top:907px;font-size:12.5px;line-height:12.5px;color:#1c1917;font-weight:400;font-family:'Liberation Mono',monospace;text-align:right;">€150.00</div>
<div class="b" style="left:252.5px;top:928px;width:1165px;height:1px;background:#f2f3f4"></div>
</body></html>
